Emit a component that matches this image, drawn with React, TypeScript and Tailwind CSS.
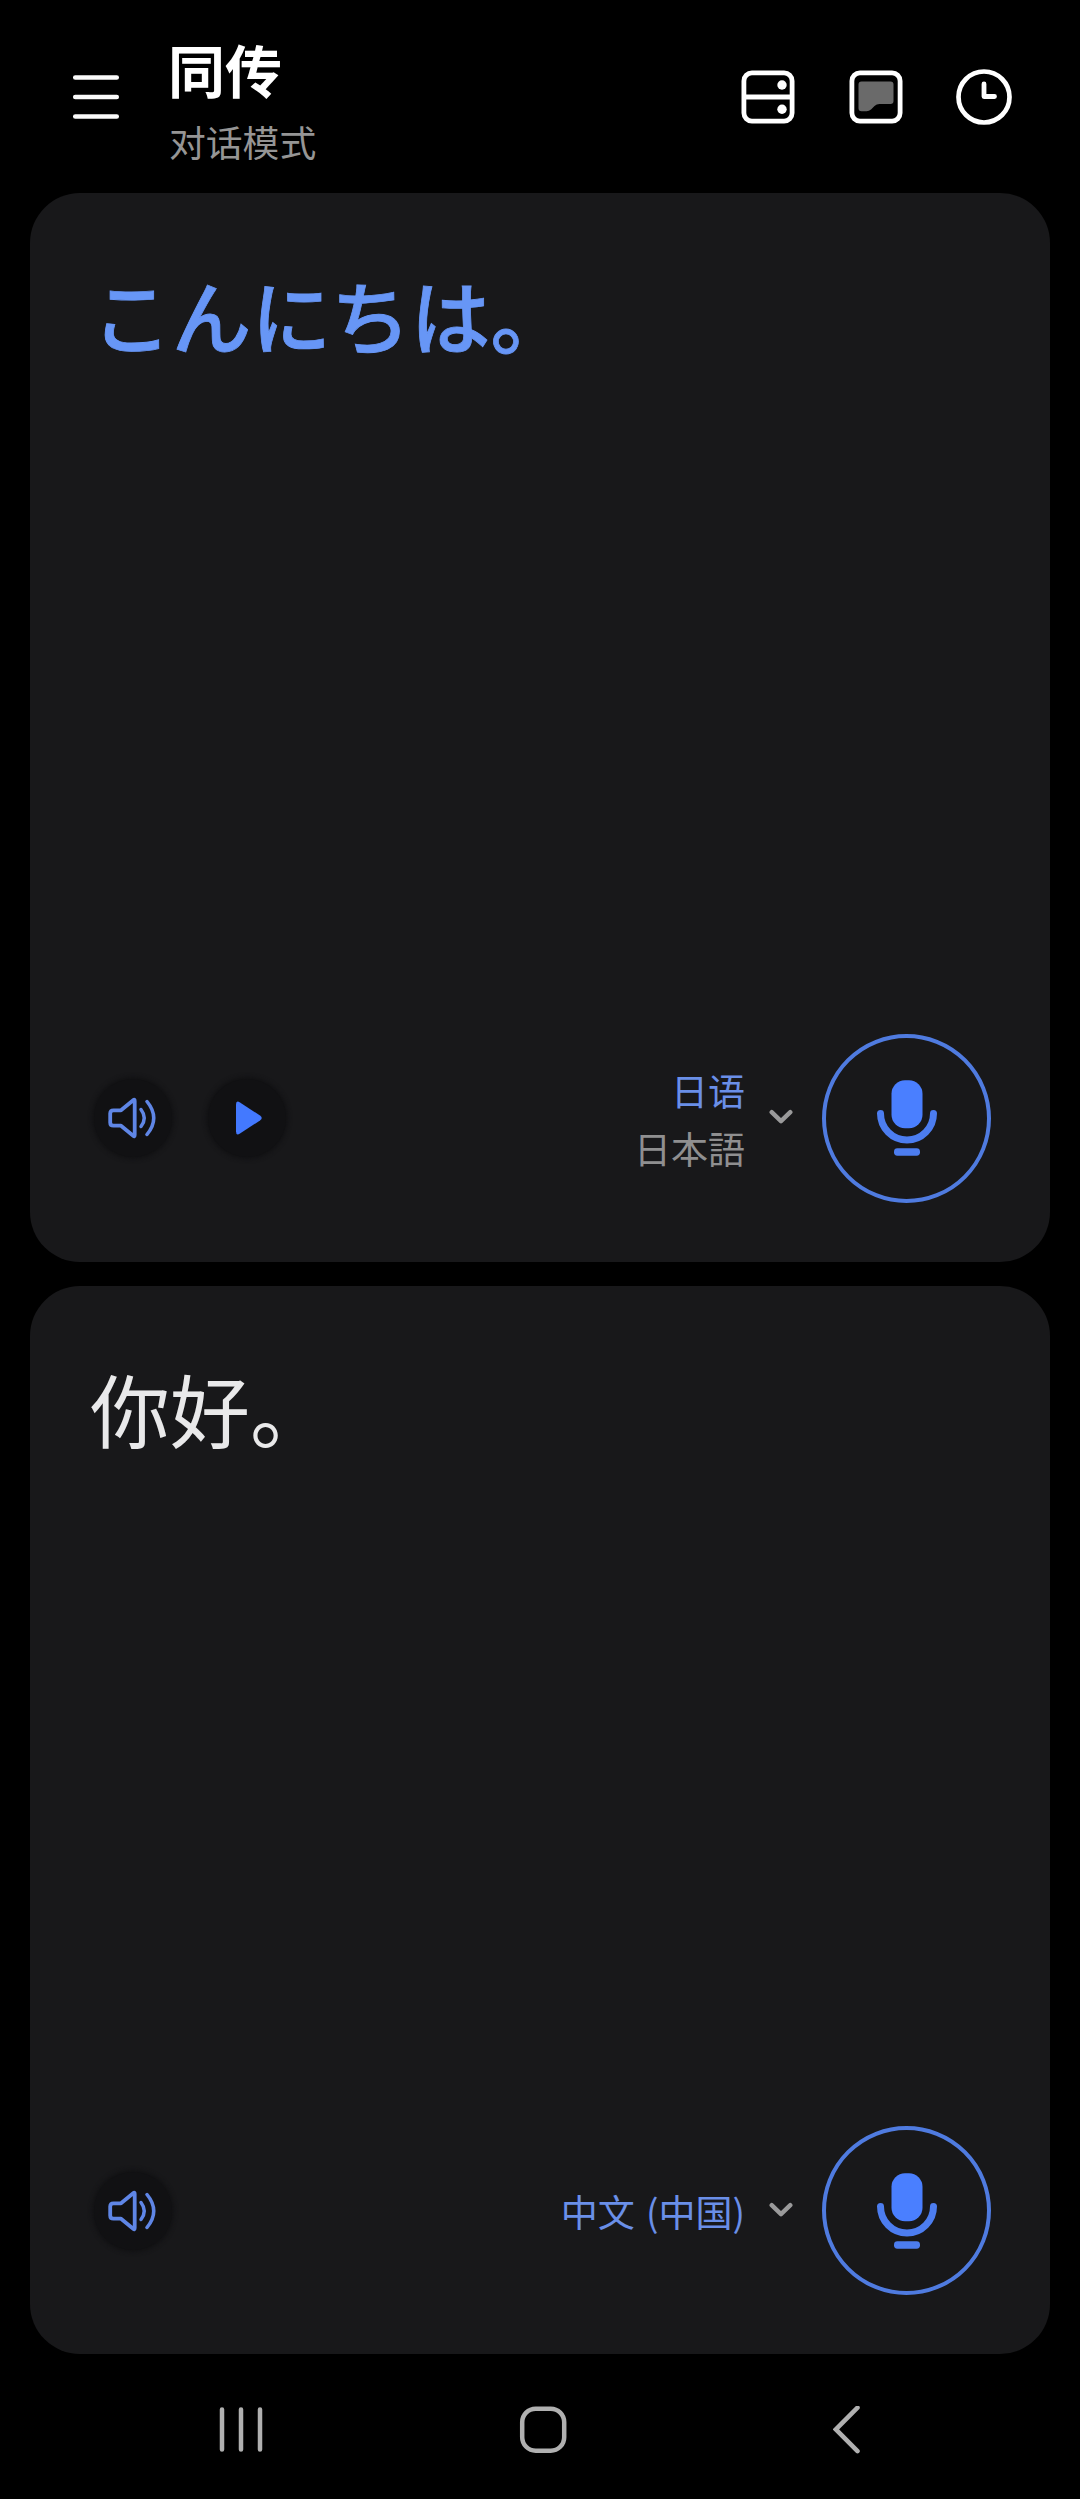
import type { ReactNode } from "react"

function MenuIcon() {
  return (
    <svg width="48" height="48" viewBox="0 0 48 48" stroke="#fafafa" strokeWidth="4.7" strokeLinecap="round">
      <path d="M3.3 4.5H44.7M3.3 24H44.7M3.3 43.5H44.7" />
    </svg>
  )
}

function SplitIcon() {
  return (
    <svg width="54" height="54" viewBox="0 0 54 54" fill="none" stroke="#fff" strokeWidth="4.8">
      <rect x="2.9" y="2.9" width="48.2" height="48.2" rx="8" />
      <path d="M3 27H51" />
      <circle cx="41" cy="15" r="4.7" fill="#fff" stroke="none" />
      <circle cx="41" cy="39.2" r="4.7" fill="#fff" stroke="none" />
    </svg>
  )
}

function CaptionIcon() {
  return (
    <svg width="54" height="54" viewBox="0 0 54 54" fill="none">
      <rect x="2.9" y="2.9" width="48.2" height="48.2" rx="8" stroke="#fff" strokeWidth="4.8" />
      <path
        d="M12.5 11.5H41.5Q44.5 11.5 44.5 14.5V31Q44.5 34 41.5 34H30.5Q27.5 34 25.5 36L22 39.5Q20 41.3 17.5 41.3H12.5Q9.5 41.3 9.5 38.3V14.5Q9.5 11.5 12.5 11.5Z"
        fill="#6a6a6a"
      />
    </svg>
  )
}

function HistoryIcon() {
  return (
    <svg width="56" height="56" viewBox="0 0 56 56" fill="none" stroke="#fff" strokeWidth="4.7">
      <circle cx="28" cy="28" r="25.5" />
      <path d="M28 15V27.5H38.5" strokeWidth="4.8" strokeLinecap="round" strokeLinejoin="round" />
    </svg>
  )
}

function SpeakerIcon() {
  return (
    <svg
      width="50"
      height="44"
      viewBox="0 0 50 44"
      fill="none"
      stroke="#5f86e6"
      strokeWidth="3.8"
      strokeLinecap="round"
      strokeLinejoin="round"
    >
      <path d="M5.5 14.3H13L25.2 4.2Q26.7 3 26.7 5V39Q26.7 41 25.2 39.8L13 29.7H5.5Q2.2 29.7 2.2 26.4V17.6Q2.2 14.3 5.5 14.3Z" />
      <path d="M33 13.5Q39.5 22 33 30.5" strokeWidth="3.5" />
      <path d="M39 5.5Q52.5 22 39 38.5" strokeWidth="3.5" />
    </svg>
  )
}

function PlayIcon() {
  return (
    <svg width="28" height="36" viewBox="0 0 28 36" fill="#4379ff" className="ml-1">
      <path d="M1 4.5Q1 0 5 2.5L25 15.5Q28.5 18 25 20.5L5 33.5Q1 36 1 31.5Z" />
    </svg>
  )
}

function ChevronIcon() {
  return (
    <svg
      width="24"
      height="16"
      viewBox="0 0 24 16"
      fill="none"
      stroke="#9a9a9b"
      strokeWidth="4.4"
      strokeLinecap="round"
      strokeLinejoin="round"
    >
      <path d="M2.7 3.2L12 12.2L21.3 3.2" />
    </svg>
  )
}

function MicButton() {
  return (
    <button className="flex size-[169px] items-center justify-center rounded-full border-4 border-[#4f7be0]">
      <svg width="62" height="78" viewBox="0 0 62 78" fill="none">
        <rect x="15.5" y="1.3" width="31" height="48" rx="13.5" fill="#4a7fff" />
        <path d="M4.5 34.5A26.5 26.5 0 0 0 57.5 34.5" stroke="#4c7df0" strokeWidth="7" strokeLinecap="round" />
        <rect x="18" y="69.3" width="26" height="7.4" rx="3.4" fill="#4c7df0" />
      </svg>
    </button>
  )
}

function RoundButton({ children }: { children: ReactNode }) {
  return (
    <button className="flex size-[78px] items-center justify-center rounded-full bg-[#111113] shadow-[0_0_4px_2px_#111113]">
      {children}
    </button>
  )
}

interface PanelProps {
  text: ReactNode
  actions: ReactNode
  language: ReactNode
}

function Panel({ text, actions, language }: PanelProps) {
  return (
    <section className="flex flex-col justify-between rounded-[50px] bg-[#18181a] pt-[61px] pr-[59px] pb-[59px] pl-[60px]">
      {text}
      <div className="flex items-center">
        <div className="ml-[4px] flex gap-[36px]">{actions}</div>
        <div className="ml-auto pt-[1px] text-right text-[37px] leading-[58px] text-[#6a8fe8]">{language}</div>
        <div className="mr-[29px] mb-[2px] ml-[24px]">
          <ChevronIcon />
        </div>
        <MicButton />
      </div>
    </section>
  )
}

export default function App() {
  return (
    <main className="flex h-[2499px] w-[1080px] flex-col overflow-hidden bg-black font-['Noto_Sans_CJK_SC',sans-serif]">
      <header className="flex h-[193px] shrink-0 items-center pr-[68px] pl-[72px]">
        <MenuIcon />
        <div className="ml-[48px] pt-[16px]">
          <h1 className="text-[57px] leading-[73px] font-bold text-white">同传</h1>
          <p className="pl-px text-[36.8px] leading-[73px] text-[#959595]">对话模式</p>
        </div>
        <div className="ml-auto flex items-center gap-[53.5px]">
          <SplitIcon />
          <CaptionIcon />
          <HistoryIcon />
        </div>
      </header>

      <div className="grid h-[2161px] shrink-0 grid-rows-2 gap-[24px] px-[30px]">
        <Panel
          text={
            <p
              lang="ja"
              className="pl-[2px] font-['Noto_Sans_CJK_JP',sans-serif] text-[79.7px] leading-[120px] font-medium text-[#6796f6] [-webkit-text-stroke:0.8px_#6796f6]"
            >
              こんにちは。
            </p>
          }
          actions={
            <>
              <RoundButton>
                <SpeakerIcon />
              </RoundButton>
              <RoundButton>
                <PlayIcon />
              </RoundButton>
            </>
          }
          language={
            <>
              <p>日语</p>
              <p lang="ja" className="font-['Noto_Sans_CJK_JP',sans-serif] text-[#8f8f90]">
                日本語
              </p>
            </>
          }
        />
        <Panel
          text={<p className="text-[80px] leading-[120px] text-[#e9e9ea]">你好。</p>}
          actions={
            <RoundButton>
              <SpeakerIcon />
            </RoundButton>
          }
          language={<p className="[word-spacing:3px]">中文 (中国)</p>}
        />
      </div>

      <nav className="flex flex-1 items-center pt-[6px] pl-[218px]">
        <svg width="46" height="48" viewBox="0 0 46 48" stroke="#b0b0b0" strokeWidth="4.5" strokeLinecap="round">
          <path d="M4 3.5V43.5M23 3.5V43.5M42 3.5V43.5" />
        </svg>
        <svg width="48" height="48" viewBox="0 0 48 48" fill="none" className="ml-[255px]">
          <rect x="3.2" y="2.7" width="42" height="42" rx="13.5" stroke="#b0b0b0" strokeWidth="4.5" />
        </svg>
        <svg width="28" height="48" viewBox="0 0 28 48" fill="none" className="ml-[266px]">
          <path d="M24.5 1.7L2.9 23.4L24.5 45.2" stroke="#b0b0b0" strokeWidth="4.5" strokeLinecap="round" />
        </svg>
      </nav>
    </main>
  )
}
